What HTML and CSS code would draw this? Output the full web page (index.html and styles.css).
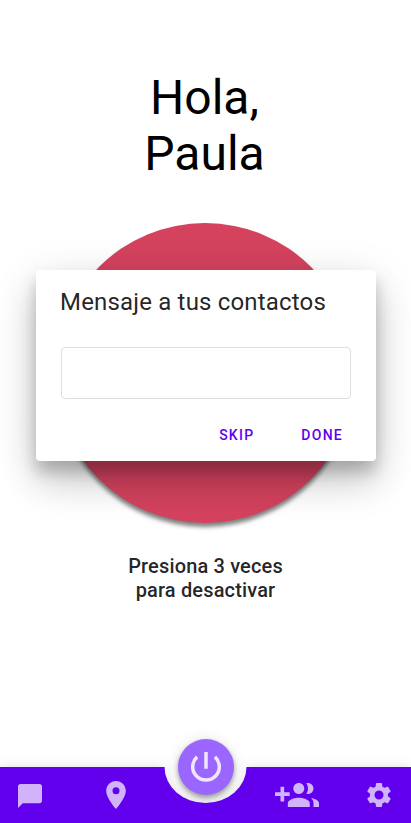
FILE: index.html
```html
<!DOCTYPE html>
<html lang="es">
<head>
<meta charset="utf-8">
<title>Hola, Paula</title>
<link rel="stylesheet" href="styles.css">
</head>
<body>
<main class="screen">
  <h1 class="greeting">Hola,<br>Paula</h1>
  <div class="alarm"></div>
  <p class="hint">Presiona 3 veces<br>para desactivar</p>
  <nav class="bar">
    <svg class="bar-shape" viewBox="0 0 411 56"><path d="M0 0H164.500A41 36 0 0 0 246.500 0H411V56H0Z"/></svg>
    <svg class="icon chat" viewBox="2 2 20 20"><path d="M20 2H4c-1.100 0-2 .9-2 2v18l4-4h14c1.100 0 2-.9 2-2V4c0-1.100-.9-2-2-2z"/></svg>
    <svg class="icon pin" viewBox="5 2 14 20"><path d="M12 2C8.130 2 5 5.130 5 9c0 5.250 7 13 7 13s7-7.750 7-13c0-3.870-3.130-7-7-7zm0 9.500a2.500 2.500 0 0 1 0-5 2.500 2.500 0 0 1 0 5z"/></svg>
    <svg class="icon people" viewBox="0 5 24 13"><path d="M8 10H5V7H3v3H0v2h3v3h2v-3h3v-2zm10 1c1.660 0 2.990-1.340 2.990-3S19.660 5 18 5c-.32 0-.63.05-.91.140.57.810.9 1.790.9 2.860s-.34 2.040-.9 2.860c.28.090.59.140.91.140zm-5 0c1.660 0 2.990-1.340 2.990-3S14.660 5 13 5c-1.660 0-3 1.340-3 3s1.340 3 3 3zm6.620 2.160c.83.730 1.380 1.660 1.380 2.840v2h3v-2c0-1.540-2.370-2.490-4.380-2.840zM13 13c-2 0-6 1-6 3v2h12v-2c0-2-4-3-6-3z"/></svg>
    <svg class="icon gear" viewBox="2.400 2.400 19.200 19.200"><path d="M19.140 12.940c.04-.3.060-.61.060-.94 0-.32-.02-.64-.07-.94l2.030-1.580c.18-.14.230-.41.120-.61l-1.920-3.320c-.12-.22-.37-.29-.59-.22l-2.390.96c-.5-.38-1.030-.7-1.620-.94l-.36-2.540c-.04-.24-.24-.41-.48-.41h-3.840c-.24 0-.43.170-.47.410l-.36 2.540c-.59.240-1.130.570-1.620.94l-2.390-.96c-.22-.08-.47 0-.59.220L2.740 8.870c-.12.210-.08.470.12.610l2.030 1.580c-.05.3-.09.630-.09.940s.02.640.07.940l-2.030 1.580c-.18.140-.23.410-.12.610l1.920 3.320c.12.220.37.290.59.220l2.390-.96c.5.380 1.030.7 1.620.94l.36 2.540c.05.240.24.410.48.410h3.840c.24 0 .44-.17.470-.41l.36-2.540c.59-.24 1.130-.56 1.620-.94l2.390.96c.22.080.47 0 .59-.22l1.920-3.320c.12-.22.070-.47-.12-.61l-2.010-1.580zM12 15.600a3.600 3.600 0 1 1 0-7.200 3.600 3.600 0 0 1 0 7.200z"/></svg>
    <button class="power" aria-label="Desactivar"><svg viewBox="0 0 30 30"><path d="M15 0V16.700M6.100 4.900A13.300 13.300 0 1 0 23.900 4.900"/></svg></button>
  </nav>
  <section class="dialog" role="dialog">
    <h2 class="title">Mensaje a tus contactos</h2>
    <input class="field" type="text" aria-label="Mensaje">
    <div class="actions"><button>SKIP</button><button>DONE</button></div>
  </section>
</main>
</body>
</html>
```
FILE: styles.css
```css
* { box-sizing: border-box; }
body { margin: 0; font-family: Roboto, sans-serif; background: #fff; }
button { border: 0; background: none; padding: 0; font: inherit; }
.screen { position: relative; height: 823px; overflow: hidden; display: flex; flex-direction: column; align-items: center; padding-top: 70px; }
.greeting { margin: 0 2px 0 0; font-size: 48px; line-height: 56px; font-weight: 400; text-align: center; color: #000; }
.alarm { width: 300px; height: 300px; flex: none; margin: 41px 1px 0 0; border-radius: 50%; background: #d4425e; box-shadow: 0 4px 4px rgba(0,0,0,.5); }
.hint { margin: 31px 0 0; font-size: 20px; line-height: 24px; font-weight: 500; letter-spacing: .15px; text-align: center; color: rgba(0,0,0,.87); }
.bar { position: relative; width: 100%; height: 56px; margin-top: auto; }
.bar-shape { display: block; width: 411px; height: 56px; overflow: visible; fill: #6200ee; filter: drop-shadow(0 0 6px rgba(0,0,0,.12)); }
.icon { position: absolute; fill: #d0b3fa; }
.chat { left: 18px; top: 17px; width: 24px; height: 24px; }
.pin { left: 105px; top: 14px; width: 22px; height: 28px; }
.people { left: 275px; top: 16px; width: 44px; height: 24px; }
.gear { left: 367px; top: 16px; width: 24px; height: 24px; }
.power { position: absolute; left: 177.5px; top: -28px; width: 56px; height: 56px; border-radius: 50%; display: grid; place-items: center; background: #9b66ff; box-shadow: 0 3px 5px rgba(0,0,0,.35), 0 1px 14px rgba(0,0,0,.12); }
.power svg { width: 30px; height: 30px; fill: none; stroke: #f0e6ff; stroke-width: 3.5; }
.dialog { position: absolute; left: 36px; top: 270px; width: 340px; height: 191px; padding: 16px 25px 0 24px; border-radius: 4px; background: #fff; box-shadow: 0 11px 15px rgba(0,0,0,.2), 0 9px 46px rgba(0,0,0,.12), 0 24px 38px rgba(0,0,0,.14); }
.title { margin: 0; font-size: 24px; line-height: 32px; font-weight: 400; letter-spacing: .18px; color: rgba(0,0,0,.87); white-space: nowrap; }
.field { display: block; width: 290px; height: 52px; margin: 29px 0 0 1px; border: 1px solid #dedede; border-radius: 4px; background: #fff; }
.actions { display: flex; justify-content: flex-end; gap: 47px; margin: 28px 8px 0 0; }
.actions button { font-size: 14px; line-height: 16px; font-weight: 500; letter-spacing: 1.25px; color: #6200ee; }
```
